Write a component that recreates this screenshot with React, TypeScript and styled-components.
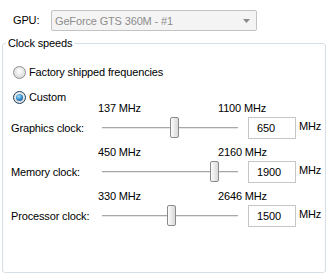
import styled, { createGlobalStyle } from "styled-components";

const GlobalStyle = createGlobalStyle`
    html, body {
        margin: 0;
        padding: 0;
        background: #ffffff;
    }
    body {
        font-family: "Liberation Sans", Arial, sans-serif;
        font-size: 11px;
        letter-spacing: -0.15px;
        color: #000;
    }
`;

const Page = styled.div`
    width: 327px;
    height: 273px;
    box-sizing: border-box;
    padding-top: 10px;
    overflow: hidden;
`;

const GpuRow = {
    Wrapper: styled.div`
        display: flex;
        align-items: center;
        padding-left: 13px;
        height: 21px;
    `,
    Label: styled.span`
        width: 38px;
        line-height: 13px;
    `,
    Select: styled.div`
        width: 206px;
        height: 21px;
        box-sizing: border-box;
        border: 1px solid #c2c2c2;
        border-radius: 2px;
        background: #f4f4f4;
        color: #8d8d8d;
        display: flex;
        align-items: center;
        justify-content: space-between;
        padding: 0 6px 0 3px;
    `,
};

const Group = {
    Box: styled.fieldset`
        margin: 5px 1px 0 2px;
        width: 324px;
        height: 237px;
        box-sizing: border-box;
        border: 1px solid #d5dfe5;
        border-radius: 3px;
        padding: 0;
    `,
    Legend: styled.legend`
        margin-left: 3px;
        padding: 0 2px;
        line-height: 14px;
    `,
    Radios: styled.div`
        display: flex;
        flex-direction: column;
        gap: 12px;
        padding: 16px 0 0 10px;
    `,
};

const Radio = {
    Row: styled.label`
        display: flex;
        align-items: center;
        gap: 3px;
        height: 13px;
        line-height: 13px;
    `,
    Circle: styled.span<{ $checked?: boolean }>`
        width: 13px;
        height: 13px;
        box-sizing: border-box;
        border-radius: 50%;
        border: 1px solid ${(p) => (p.$checked ? "#1d3f5f" : "#8e8f8f")};
        background: radial-gradient(circle at 50% 40%, #ffffff, #dcdcdc 70%, #c9c9c9);
        display: flex;
        align-items: center;
        justify-content: center;
        &::after {
            content: "";
            display: ${(p) => (p.$checked ? "block" : "none")};
            width: 7px;
            height: 7px;
            border-radius: 50%;
            background: radial-gradient(circle at 40% 35%, #a9e2fb, #2b84c7 55%, #0d3f6e);
        }
    `,
};

const Sliders = styled.div`
    display: flex;
    flex-direction: column;
    gap: 7px;
    padding: 0 0 0 8px;
    margin-top: -2px;
`;

const SliderRow = {
    Wrapper: styled.div`
        display: flex;
        flex-direction: column;
        gap: 2px;
    `,
    Scale: styled.div`
        display: flex;
        height: 13px;
        line-height: 13px;
        padding-left: 87px;
    `,
    Min: styled.span`
        width: 120px;
    `,
    Controls: styled.div`
        display: grid;
        grid-template-columns: 91px 136px 10px 48px auto;
        align-items: center;
        height: 22px;
    `,
    Label: styled.span`
        line-height: 13px;
        padding-top: 1px;
    `,
    Unit: styled.span`
        align-self: start;
        line-height: 13px;
        padding: 3px 0 0 3px;
    `,
};

const Slider = {
    Track: styled.div`
        position: relative;
        height: 22px;
        &::before {
            content: "";
            position: absolute;
            left: 0;
            right: 0;
            top: 10px;
            height: 1px;
            background: #a8a8a8;
            border-bottom: 1px solid #e6e6e6;
        }
    `,
    Thumb: styled.div`
        position: absolute;
        top: 0;
        width: 9px;
        height: 21px;
        box-sizing: border-box;
        border: 1px solid #8a8a8a;
        border-radius: 2px;
        background: linear-gradient(to right, #fdfdfd, #e6e6e6 60%, #dadada);
    `,
};

const ValueInput = styled.div`
    grid-column: 4;
    height: 22px;
    box-sizing: border-box;
    border: 1px solid #c5c5c5;
    padding-left: 8px;
    display: flex;
    align-items: center;
    line-height: 13px;
`;

type Clock = { label: string; min: number; max: number; value: number };

const clocks: Clock[] = [
    { label: "Graphics clock:", min: 137, max: 1100, value: 650 },
    { label: "Memory clock:", min: 450, max: 2160, value: 1900 },
    { label: "Processor clock:", min: 330, max: 2646, value: 1500 },
];

function ClockSlider({ clock }: { clock: Clock }) {
    const ratio = (clock.value - clock.min) / (clock.max - clock.min);
    const left = Math.round(ratio * 126);
    return (
        <SliderRow.Wrapper>
            <SliderRow.Scale>
                <SliderRow.Min>{clock.min} MHz</SliderRow.Min>
                <span>{clock.max} MHz</span>
            </SliderRow.Scale>
            <SliderRow.Controls>
                <SliderRow.Label>{clock.label}</SliderRow.Label>
                <Slider.Track>
                    <Slider.Thumb style={{ left: left + 1 }} />
                </Slider.Track>
                <ValueInput>{clock.value}</ValueInput>
                <SliderRow.Unit>MHz</SliderRow.Unit>
            </SliderRow.Controls>
        </SliderRow.Wrapper>
    );
}

export default function App() {
    return (
        <>
            <GlobalStyle />
            <Page>
                <GpuRow.Wrapper>
                    <GpuRow.Label>GPU:</GpuRow.Label>
                    <GpuRow.Select>
                        <span>GeForce GTS 360M - #1</span>
                        <svg width="7" height="4" viewBox="0 0 7 4">
                            <path d="M0 0 H7 L3.5 4 Z" fill="#8a8a8a" />
                        </svg>
                    </GpuRow.Select>
                </GpuRow.Wrapper>
                <Group.Box>
                    <Group.Legend>Clock speeds</Group.Legend>
                    <Group.Radios>
                        <Radio.Row>
                            <Radio.Circle />
                            Factory shipped frequencies
                        </Radio.Row>
                        <Radio.Row>
                            <Radio.Circle $checked />
                            Custom
                        </Radio.Row>
                    </Group.Radios>
                    <Sliders>
                        {clocks.map((c) => (
                            <ClockSlider key={c.label} clock={c} />
                        ))}
                    </Sliders>
                </Group.Box>
            </Page>
        </>
    );
}
